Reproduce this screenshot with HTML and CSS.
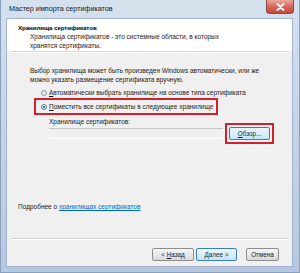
FILE: index.html
```html
<!DOCTYPE html>
<html lang="ru">
<head>
    <meta charset="UTF-8">
    <meta name="viewport" content="width=device-width, initial-scale=1.0">
    <title>Мастер импорта сертификатов</title>
    <link rel="stylesheet" href="styles.css">
</head>
<body>
    <div class="window">
        <div class="titlebar">
            <span class="title">Мастер импорта сертификатов</span>
            <span class="close">
                <svg width="9" height="8" viewBox="0 0 9 8">
                    <path d="M1.5 1 L7.5 7 M7.5 1 L1.5 7" stroke="#fff" stroke-width="1.8" stroke-linecap="round"/>
                </svg>
            </span>
        </div>
        <div class="client">
            <div class="header">
                <div class="header-title">Хранилища сертификатов</div>
                <div class="header-sub">Хранилища сертификатов - это системные области, в которых<br>хранятся сертификаты.</div>
            </div>
            <div class="header-line"></div>

            <div class="content">
                <p class="intro">Выбор хранилища может быть произведен Windows автоматически, или же<br>можно указать размещение сертификата вручную.</p>

                <div class="option">
                    <span class="radio"></span>
                    <span><u>А</u>втоматически выбрать хранилище на основе типа сертификата</span>
                </div>
                <div class="option option-marked">
                    <span class="radio radio-on"></span>
                    <span><u>П</u>оместить все сертификаты в следующее хранилище</span>
                </div>

                <div class="store-row">
                    <div class="store-left">
                        <div class="store-label">Хранилище сертификатов:</div>
                        <div class="store-field"></div>
                    </div>
                    <div class="browse-mark">
                        <button class="btn btn-hot"><u>О</u>бзор...</button>
                    </div>
                </div>

                <p class="more">Подробнее о <a href="#">хранилищах сертификатов</a></p>
            </div>

            <div class="footer-line"></div>
            <div class="footer">
                <button class="btn btn-back">&lt; <u>Н</u>азад</button>
                <button class="btn btn-next btn-hot">Далее &gt;</button>
                <button class="btn btn-cancel">Отмена</button>
            </div>
        </div>
    </div>
</body>
</html>
```

FILE: styles.css
```css
body {
    margin: 0;
    font-family: "Liberation Sans", Arial, sans-serif;
    font-size: 6.5px;
    line-height: 9px;
    color: #1a1a1a;
    background: #fff;
}
.window {
    width: 300px;
    height: 273px;
    box-sizing: border-box;
    padding: 0 6px 5px 5px;
    display: flex;
    flex-direction: column;
    background: linear-gradient(180deg, #d6e1ee 0%, #c7d5e8 40%, #b6c8e0 100%);
    border: 1px solid #8aa0bf;
    border-top: none;
}
.titlebar {
    height: 18px;
    display: flex;
    align-items: flex-start;
    justify-content: space-between;
}
.title {
    margin: 4px 0 0 3px;
    font-size: 7.2px;
    color: #141c28;
}
.close {
    width: 28px;
    height: 14px;
    margin-right: -1px;
    display: flex;
    align-items: center;
    justify-content: center;
    border: 1px solid #8a4a44;
    border-top: none;
    border-radius: 0 0 4px 4px;
    box-sizing: border-box;
    background: linear-gradient(180deg, #e9a89b 0%, #d6685a 50%, #c44a3a 100%);
}
.client {
    flex: 1;
    display: flex;
    flex-direction: column;
    background: #f0f0f0;
    border: 1px solid #a3b4d0;
}
.header {
    background: #fff;
    padding: 4px 0 1px 11px;
}
.header-title {
    font-weight: bold;
    font-size: 6.2px;
    letter-spacing: -0.1px;
    color: #000;
}
.header-sub {
    padding-left: 12px;
}
.header-line {
    height: 1px;
    background: #d2d8de;
    border-bottom: 1px solid #fff;
    margin: 0 4px;
}
.content {
    flex: 1;
    display: flex;
    flex-direction: column;
    padding-left: 23px;
}
.intro {
    margin: 13px 0 4px;
}
.option {
    display: flex;
    align-items: center;
    gap: 2px;
    height: 9px;
    margin-left: 11px;
    margin-bottom: 1px;
    white-space: nowrap;
}
.option-marked {
    width: 175px;
    height: 13px;
    margin: 0 0 0 4px;
    padding-left: 5px;
    border: 2px solid #d3202f;
}
.radio {
    width: 6px;
    height: 6px;
    flex: none;
    border-radius: 50%;
    border: 1px solid #8e9aa6;
    box-sizing: border-box;
    background: radial-gradient(circle, #f4f4f4 0%, #dcdcdc 100%);
}
.radio-on {
    background: radial-gradient(circle, #3d9b79 0%, #2b7f63 45%, #e8eef0 55%);
    border-color: #5f7f95;
}
.store-row {
    display: flex;
    align-items: flex-start;
    margin-top: 2px;
    padding-left: 19px;
}
.store-left {
    width: 174px;
}
.store-field {
    height: 11px;
    margin-top: 2px;
    box-sizing: border-box;
    border-top: 1px solid #c6c6c6;
    border-bottom: 1px solid #fff;
    background: #f0f0f0;
}
.browse-mark {
    margin: 6px 0 0 2px;
    padding: 2px;
    border: 2px solid #d3202f;
}
.btn {
    height: 13px;
    padding: 0;
    font-family: "Liberation Sans", Arial, sans-serif;
    font-size: 6.3px;
    color: #1a1a1a;
    border: 1px solid #8d8d8d;
    border-radius: 2px;
    background: linear-gradient(180deg, #f6f6f6 0%, #e8e8e8 50%, #d9d9d9 100%);
}
.btn-hot {
    border-color: #3c7fb1;
    background: linear-gradient(180deg, #eaf6fd 0%, #d9f0fc 50%, #bee6fd 100%);
}
.browse-mark .btn {
    width: 41px;
}
.more {
    margin: auto 0 27px -12px;
}
.more a {
    color: #0066cc;
}
.footer-line {
    height: 1px;
    background: #d2d2d2;
    border-bottom: 1px solid #fff;
    margin: 0 4px;
}
.footer {
    display: flex;
    justify-content: flex-end;
    padding: 8px 13px 5px 0;
}
.btn-back {
    width: 42px;
}
.btn-next {
    width: 41px;
    margin-left: 2px;
}
.btn-cancel {
    width: 33px;
    margin-left: 9px;
}
```
